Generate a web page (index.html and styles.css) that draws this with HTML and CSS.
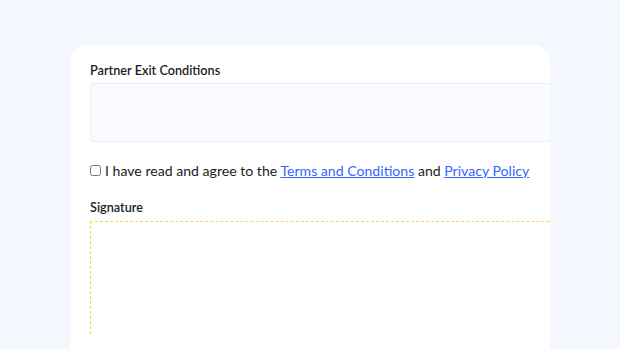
FILE: index.html
```html
<!DOCTYPE html>
<html lang="en">
<head>
    <meta charset="UTF-8">
    <meta name="viewport" content="width=device-width, initial-scale=1.0">
    <title>Partner Agreement</title>
    <link rel="stylesheet" href="styles.css">
</head>
<body>
    <div class="card">
        <div class="field">
            <label class="label" for="exit">Partner Exit Conditions</label>
            <textarea id="exit" class="input"></textarea>
        </div>
        <div class="agree">
            <input type="checkbox" id="agree">
            <label for="agree">I have read and agree to the <a href="#">Terms and Conditions</a> and <a href="#">Privacy Policy</a></label>
        </div>
        <div class="field">
            <div class="label">Signature</div>
            <div class="signature"></div>
        </div>
    </div>
</body>
</html>
```

FILE: styles.css
```css
body {
    margin: 0;
    background-color: #f4f7fe;
    font-family: Lato, "Noto Sans", sans-serif;
    color: #1c1c1c;
}
.card {
    margin: 45px 0 0 70px;
    width: 460px;
    height: 304px;
    padding: 17px 0 0 20px;
    background: #fff;
    border-radius: 16px 16px 0 0;
    overflow: hidden;
}
.field {
    width: 600px;
}
.label {
    display: block;
    font-size: 12.7px;
    font-weight: 600;
    margin-bottom: 5px;
}
.input {
    display: block;
    box-sizing: border-box;
    width: 100%;
    height: 59px;
    border: 1px solid #e8edf8;
    border-radius: 4px;
    background: #fafbff;
    resize: none;
}
.agree {
    display: flex;
    align-items: center;
    margin: 20px 0 20px;
    font-size: 14.1px;
    white-space: nowrap;
}
.agree input {
    margin: 0 4px 0 0;
    width: 11px;
    height: 11px;
}
.agree a {
    color: #3366ff;
}
.signature {
    height: 112px;
    margin-top: 6px;
    border: 1px dashed #fcd934;
    border-bottom: none;
}
```
